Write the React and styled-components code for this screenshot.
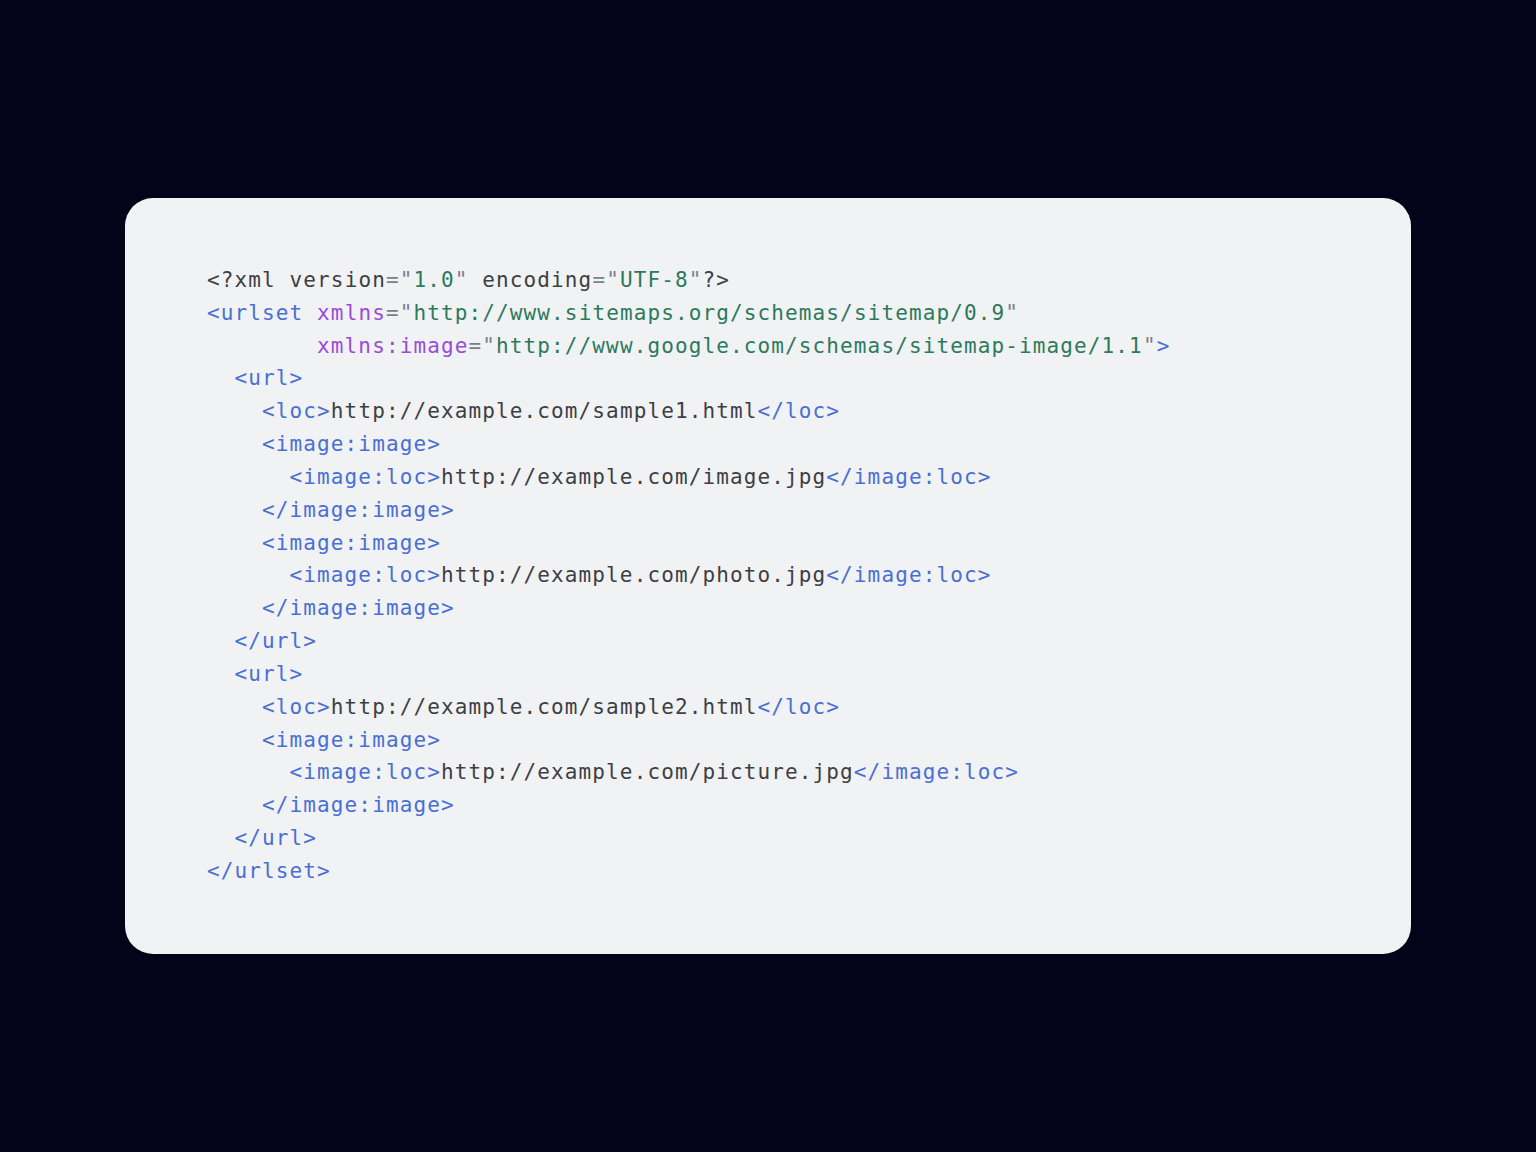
import styled, { createGlobalStyle } from "styled-components";

const GlobalStyle = createGlobalStyle`
  html, body {
    margin: 0;
    padding: 0;
    background: #03041a;
  }
`;

const Page = styled.div`
  width: 1536px;
  height: 1152px;
  background: #03041a;
  display: flex;
  justify-content: center;
  align-items: center;
  box-sizing: border-box;
`;

const Card = styled.div`
  width: 1286px;
  height: 756px;
  box-sizing: border-box;
  background: #f1f2f4;
  border-radius: 28px;
  padding: 66px 82px 0;
`;

const Code = styled.pre`
  margin: 0;
  font-family: "DejaVu Sans Mono", "Liberation Mono", monospace;
  font-size: 21px;
  letter-spacing: 1.12px;
  line-height: 32.83px;
  color: #3d3f44;
  white-space: pre;
`;

const Line = styled.div`
  padding-left: ${(p) => p.indent * 13.76}px;
  height: 32.83px;
`;

const Tok = styled.span`
  color: ${(p) =>
    p.k === "tag"
      ? "#4a6fd3"
      : p.k === "attr"
      ? "#9a4cd6"
      : p.k === "str"
      ? "#2c7a5c"
      : p.k === "punc"
      ? "#7a7f88"
      : "#3d3f44"};
`;

const T = ({ k, children }) => <Tok k={k}>{children}</Tok>;

const Str = ({ v }) => (
  <>
    <T k="punc">"</T>
    <T k="str">{v}</T>
    <T k="punc">"</T>
  </>
);

const Open = ({ name }) => <T k="tag">{`<${name}>`}</T>;
const Close = ({ name }) => <T k="tag">{`</${name}>`}</T>;

const imageBlock = (url) => [
  [4, <Open name="image:image" />],
  [
    6,
    <>
      <Open name="image:loc" />
      <T>{url}</T>
      <Close name="image:loc" />
    </>,
  ],
  [4, <Close name="image:image" />],
];

const lines = [
  [
    0,
    <>
      <T>{"<?xml version"}</T>
      <T k="punc">=</T>
      <Str v="1.0" />
      <T>{" encoding"}</T>
      <T k="punc">=</T>
      <Str v="UTF-8" />
      <T>{"?>"}</T>
    </>,
  ],
  [
    0,
    <>
      <T k="tag">{"<urlset "}</T>
      <T k="attr">xmlns</T>
      <T k="punc">=</T>
      <Str v="http://www.sitemaps.org/schemas/sitemap/0.9" />
    </>,
  ],
  [
    8,
    <>
      <T k="attr">xmlns:image</T>
      <T k="punc">=</T>
      <Str v="http://www.google.com/schemas/sitemap-image/1.1" />
      <T k="tag">{">"}</T>
    </>,
  ],
  [2, <Open name="url" />],
  [
    4,
    <>
      <Open name="loc" />
      <T>http://example.com/sample1.html</T>
      <Close name="loc" />
    </>,
  ],
  ...imageBlock("http://example.com/image.jpg"),
  ...imageBlock("http://example.com/photo.jpg"),
  [2, <Close name="url" />],
  [2, <Open name="url" />],
  [
    4,
    <>
      <Open name="loc" />
      <T>http://example.com/sample2.html</T>
      <Close name="loc" />
    </>,
  ],
  ...imageBlock("http://example.com/picture.jpg"),
  [2, <Close name="url" />],
  [0, <Close name="urlset" />],
];

export default function App() {
  return (
    <>
      <GlobalStyle />
      <Page>
        <Card>
          <Code>
            {lines.map(([indent, content], i) => (
              <Line key={i} indent={indent}>
                {content}
              </Line>
            ))}
          </Code>
        </Card>
      </Page>
    </>
  );
}
